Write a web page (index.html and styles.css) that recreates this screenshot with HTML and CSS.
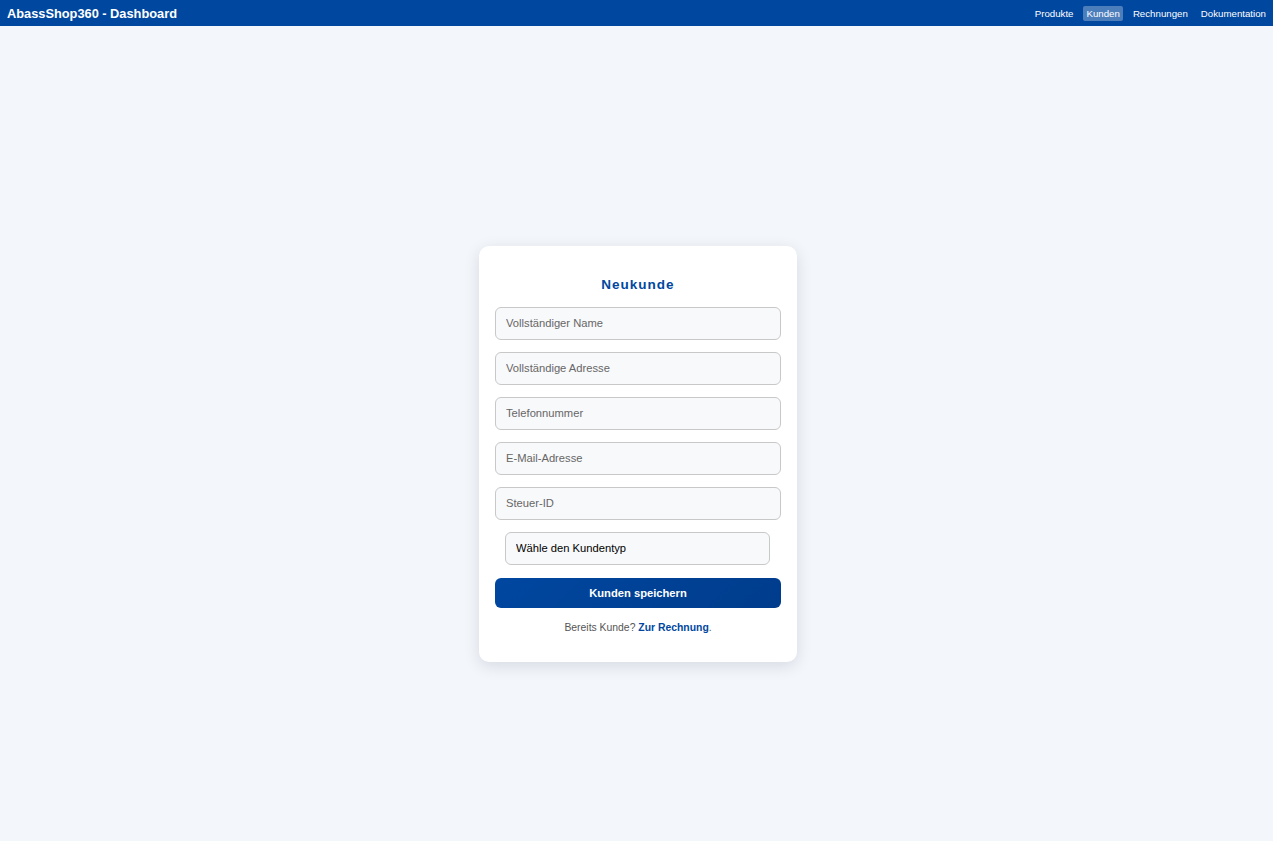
FILE: index.html
```html
<!DOCTYPE html>
<html lang="de">
<head>
    <meta charset="UTF-8">
    <meta name="viewport" content="width=device-width, initial-scale=1.0">
    <title>AbassShop360 - Dashboard</title>
    <link rel="stylesheet" href="styles.css">
</head>
<body>
    <header class="topbar">
        <div class="brand">AbassShop360 - Dashboard</div>
        <nav class="nav">
            <a href="#">Produkte</a>
            <a href="#" class="active">Kunden</a>
            <a href="#">Rechnungen</a>
            <a href="#">Dokumentation</a>
        </nav>
    </header>

    <main class="page">
        <form class="card">
            <h2>Neukunde</h2>
            <input type="text" placeholder="Vollständiger Name">
            <input type="text" placeholder="Vollständige Adresse">
            <input type="text" placeholder="Telefonnummer">
            <input type="email" placeholder="E-Mail-Adresse">
            <input type="text" placeholder="Steuer-ID">
            <select class="type-select">
                <option>Wähle den Kundentyp</option>
                <option>Privatkunde</option>
                <option>Geschäftskunde</option>
            </select>
            <button type="button">Kunden speichern</button>
            <p class="hint">Bereits Kunde? <a href="#">Zur Rechnung</a>.</p>
        </form>
    </main>
</body>
</html>
```

FILE: styles.css
```css
* {
    box-sizing: border-box;
}
html, body {
    height: 100%;
}
body {
    margin: 0;
    font-family: "Liberation Sans", Arial, sans-serif;
    background-color: #f3f6fa;
    display: flex;
    flex-direction: column;
}
.topbar {
    height: 26px;
    background-color: #0047a0;
    color: white;
    display: flex;
    align-items: center;
    justify-content: space-between;
    padding: 0 4px 0 7px;
}
.brand {
    font-size: 12.8px;
    font-weight: bold;
}
.nav {
    display: flex;
    gap: 7px;
}
.nav a {
    color: white;
    text-decoration: none;
    font-size: 9.7px;
    padding: 2px 3px;
    border-radius: 2px;
}
.nav a.active {
    background-color: rgba(255, 255, 255, 0.3);
}
.page {
    flex: 1;
    display: flex;
    align-items: center;
    justify-content: center;
    padding: 40px 0 0 3px;
}
.card {
    width: 318px;
    background-color: white;
    border-radius: 10px;
    padding: 30px 16px 29px;
    box-shadow: 0 4px 16px rgba(0, 20, 60, 0.12);
    display: flex;
    flex-direction: column;
}
h2 {
    margin: 0 0 14px;
    text-align: center;
    font-size: 13.5px;
    line-height: 17px;
    letter-spacing: 1px;
    color: #0047a0;
}
input, .type-select {
    height: 33px;
    margin-bottom: 12px;
    padding: 0 10px;
    border: 1px solid #c8c8c8;
    border-radius: 6px;
    background-color: #f8f9fb;
    font-family: inherit;
    font-size: 11.2px;
    color: #222;
}
input::placeholder {
    color: #666;
}
.type-select {
    margin: 0 11px 13px 10px;
    appearance: none;
    -webkit-appearance: none;
    color: black;
}
button {
    height: 30px;
    border: none;
    border-radius: 6px;
    background: linear-gradient(135deg, #0047a0, #003c8c);
    color: white;
    font-family: inherit;
    font-size: 11.2px;
    font-weight: bold;
    cursor: pointer;
}
.hint {
    margin: 14px 0 0;
    text-align: center;
    font-size: 10.4px;
    color: #555;
}
.hint a {
    color: #0047a0;
    font-weight: bold;
    text-decoration: none;
}
```
